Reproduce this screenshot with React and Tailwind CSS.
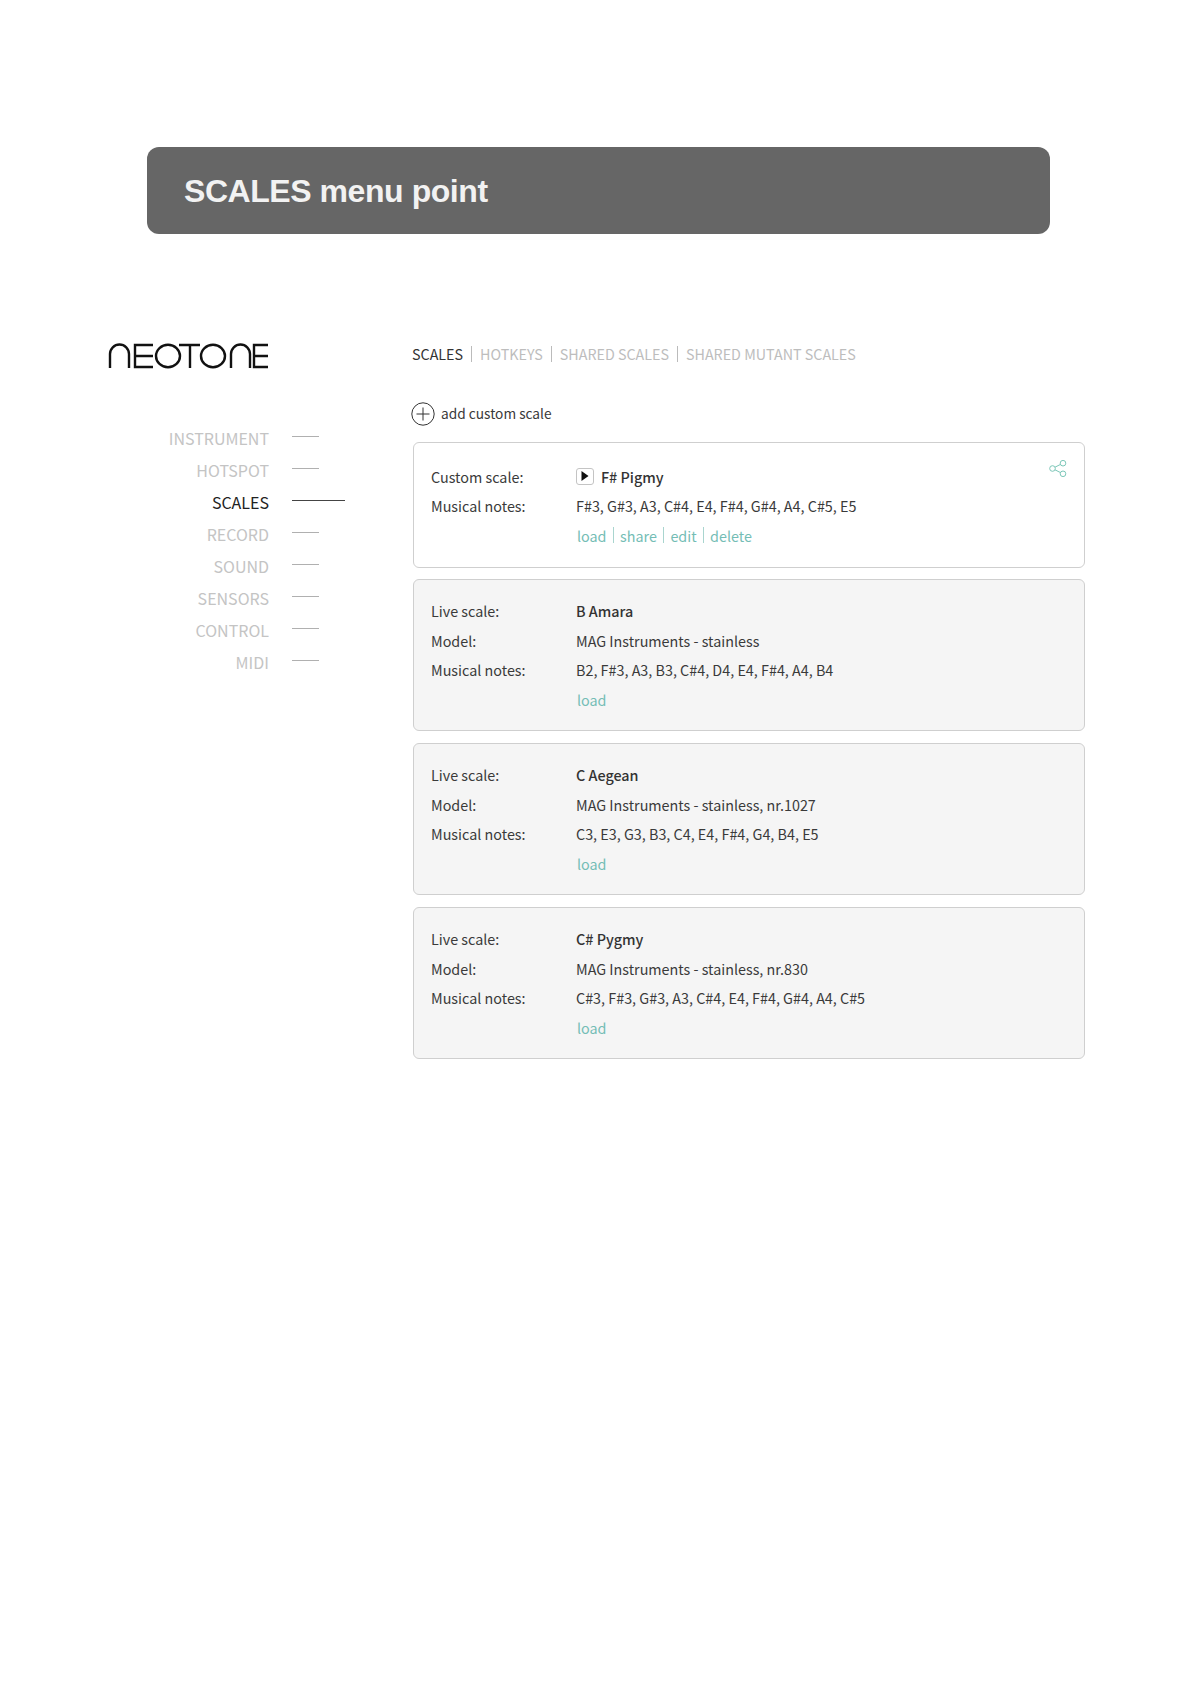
const navItems = ['INSTRUMENT', 'HOTSPOT', 'SCALES', 'RECORD', 'SOUND', 'SENSORS', 'CONTROL', 'MIDI'];

const tabs = ['SCALES', 'HOTKEYS', 'SHARED SCALES', 'SHARED MUTANT SCALES'];

const liveScales = [
  { name: 'B Amara', model: 'MAG Instruments - stainless', notes: 'B2, F#3, A3, B3, C#4, D4, E4, F#4, A4, B4' },
  { name: 'C Aegean', model: 'MAG Instruments - stainless, nr.1027', notes: 'C3, E3, G3, B3, C4, E4, F#4, G4, B4, E5' },
  { name: 'C# Pygmy', model: 'MAG Instruments - stainless, nr.830', notes: 'C#3, F#3, G#3, A3, C#4, E4, F#4, G#4, A4, C#5' },
];

const Logo = () => (
  <svg width="162" height="26" viewBox="0 0 162 26" fill="none" stroke="#111" strokeWidth="2.4" role="img" aria-label="Neotone">
    <path d="M2 25V11a9.5 9.5 0 0 1 19 0V25" />
    <path d="M45 2H27V24H45M27 13H45" />
    <ellipse cx="60" cy="13" rx="12" ry="11.3" />
    <path d="M71 2H92M82 2V25" />
    <ellipse cx="105" cy="13" rx="12" ry="11.3" />
    <path d="M123 25V11a9.5 9.5 0 0 1 19 0V25" />
    <path d="M160 2H146V24H160M146 13H160" />
  </svg>
);

const Row = ({ label, children }) => (
  <div className="flex h-[29.6px] items-center">
    <div className="w-[145px] shrink-0">{label}</div>
    <div className="flex items-center">{children}</div>
  </div>
);

const Sep = () => <span className="ml-[6px] mr-[6.5px] h-[16px] w-px bg-[#a9d5cf]" />;

export default function App() {
  return (
    <div className="min-h-[1684px] bg-white pt-[147px] font-['Noto_Sans_CJK_JP','Noto_Sans',sans-serif] text-[14.35px] text-[#3a3a3a]">
      {/* Title bar */}
      <div className="ml-[147px] flex h-[87px] w-[903px] items-center rounded-[12px] bg-[#666666] pl-[37px] font-['Liberation_Sans',sans-serif] text-[32px] font-bold tracking-[-0.44px] text-[#f2f2f2]">
        SCALES menu point
      </div>

      <div className="mt-[107px] flex pl-[108px]">
        {/* Sidebar */}
        <div className="w-[305px] shrink-0">
          <div className="mt-[2px]">
            <Logo />
          </div>
          <div className="mt-[51px] flex flex-col">
            {navItems.map((item) => (
              <div key={item} className="flex h-[32px] items-center">
                <div className={`w-[161px] pt-[3px] text-right text-[16px] ${item === 'SCALES' ? 'text-[#222]' : 'text-[#c4c4c4]'}`}>{item}</div>
                <div className={`ml-[23px] h-px ${item === 'SCALES' ? 'w-[53px] bg-[#444]' : 'w-[27px] bg-[#b0b0b0]'}`} />
              </div>
            ))}
          </div>
        </div>

        {/* Content */}
        <div className="w-[672px]">
          <div className="-ml-[1px] -mt-[2px] flex h-[30px] items-center text-[14.3px] text-[#bdbdbd]">
            {tabs.map((tab, i) => (
              <span key={tab} className="flex items-center">
                {i > 0 && <span className="mx-[8px] h-[16px] w-px bg-[#bbb]" />}
                <span className={i === 0 ? 'text-[#333]' : ''}>{tab}</span>
              </span>
            ))}
          </div>

          <div className="-ml-[2px] mt-[31px] flex h-[26px] items-center gap-[6px] text-[13.7px]">
            <svg className="mt-[2px]" width="24" height="24" viewBox="0 0 24 24" fill="none" stroke="#333" strokeWidth="1">
              <circle cx="12" cy="12" r="11.2" />
              <path d="M12 5.5V18.5M5.5 12H18.5" />
            </svg>
            add custom scale
          </div>

          {/* Custom scale */}
          <div className="relative mt-[16px] h-[126px] rounded-[6px] border-[1.5px] border-[#cfcfcf] bg-white pl-[17px] pt-[18.5px]">
            <svg className="absolute right-[17px] top-[17px]" width="18" height="17" viewBox="0 0 18 17" fill="none" stroke="#7cc7b8" strokeWidth="1">
              <circle cx="3.5" cy="8.5" r="2.8" />
              <circle cx="14" cy="3.2" r="2.8" />
              <circle cx="14" cy="13.8" r="2.8" />
              <path d="M6 7.2L11.5 4.4M6 9.8L11.5 12.6" />
            </svg>
            <Row label="Custom scale:">
              <span className="mr-[7px] flex h-[17px] w-[18px] items-center justify-center rounded-[3px] border border-[#c4c4c4]">
                <svg width="8" height="10" viewBox="0 0 8 10" fill="#111"><path d="M0.5 0L7.5 5L0.5 10Z" /></svg>
              </span>
              <span className="font-medium text-[#333]">F# Pigmy</span>
            </Row>
            <Row label="Musical notes:">F#3, G#3, A3, C#4, E4, F#4, G#4, A4, C#5, E5</Row>
            <Row label="">
              <span className="ml-[1px] text-[#74bdb5]">load</span>
              <Sep />
              <span className="text-[#74bdb5]">share</span>
              <Sep />
              <span className="text-[#74bdb5]">edit</span>
              <Sep />
              <span className="text-[#74bdb5]">delete</span>
            </Row>
          </div>

          {/* Live scales */}
          <div className="mt-[11px] flex flex-col gap-[12px]">
            {liveScales.map((scale) => (
              <div key={scale.name} className="h-[152px] rounded-[6px] border-[1.5px] border-[#cfcfcf] bg-[#f5f5f5] pl-[17px] pt-[16px]">
                <Row label="Live scale:">
                  <span className="font-medium text-[#333]">{scale.name}</span>
                </Row>
                <Row label="Model:">{scale.model}</Row>
                <Row label="Musical notes:">{scale.notes}</Row>
                <Row label="">
                  <span className="ml-[1px] text-[#74bdb5]">load</span>
                </Row>
              </div>
            ))}
          </div>
        </div>
      </div>
    </div>
  );
}
